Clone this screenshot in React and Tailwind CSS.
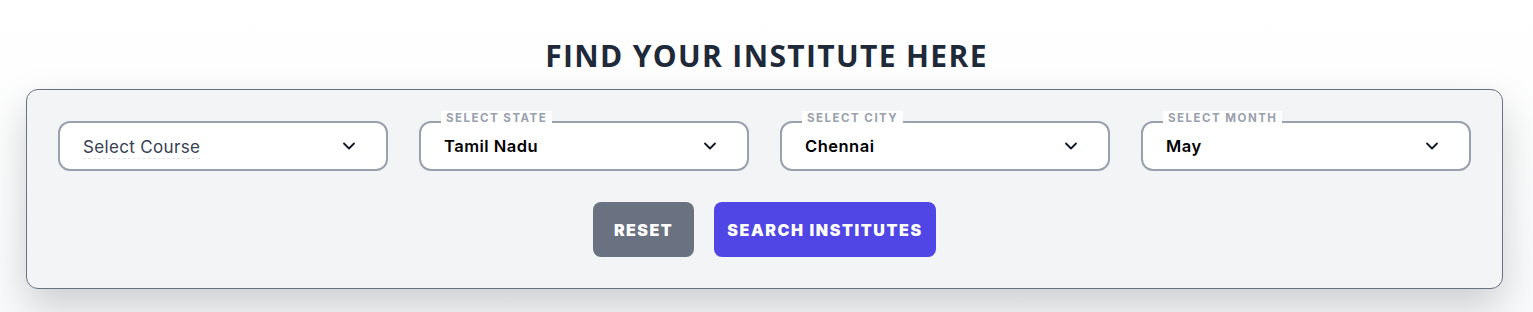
import React from 'react';
import { ChevronDown } from 'lucide-react';

// Institute search panel
function SelectField({ label, value, placeholder }) {
    return (
        <div className="relative h-[50px] rounded-xl border-2 border-gray-400 bg-white flex items-center justify-between pl-[23px] pr-[27px]">
            {label && (
                <span className="absolute -top-[12px] left-[20px] px-[5px] bg-white text-[11.5px] leading-[14px] font-bold tracking-[0.13em] text-gray-400 uppercase">
                    {label}
                </span>
            )}
            {value ? (
                <span className="text-[16.5px] font-semibold text-black tracking-[0.03em]">{value}</span>
            ) : (
                <span className="text-[17px] text-gray-700 tracking-[0.02em] border-b border-dashed border-gray-200 leading-[22px] mt-[2px]">{placeholder}</span>
            )}
            <ChevronDown className="w-[20px] h-[20px] text-gray-900" strokeWidth={2.2} />
        </div>
    );
}

export default function App() {
    return (
        <div className="min-h-screen bg-gradient-to-b from-white to-gray-50 pt-[37px] font-['Inter','Open_Sans',sans-serif]">
            <h1 className="text-center text-[30px] leading-[38px] font-bold text-gray-800 tracking-[0.045em] font-['Open_Sans','Inter',sans-serif] mb-[14px]">
                FIND YOUR INSTITUTE HERE
            </h1>

            <div className="ml-[26px] w-[1477px] rounded-xl border border-gray-500 bg-gray-100 p-[31px] shadow-[0_18px_40px_rgba(0,0,0,0.18)]">
                <div className="grid grid-cols-4 gap-[31px]">
                    <SelectField placeholder="Select Course" />
                    <SelectField label="Select State" value="Tamil Nadu" />
                    <SelectField label="Select City" value="Chennai" />
                    <SelectField label="Select Month" value="May" />
                </div>

                <div className="flex justify-center gap-[20px] mt-[31px]">
                    <button className="h-[55px] w-[101px] rounded-lg bg-gray-500 text-white text-[16px] font-black tracking-[0.09em]">
                        RESET
                    </button>
                    <button className="h-[55px] w-[222px] rounded-lg bg-[#4f46e5] text-white text-[16px] font-black tracking-[0.1em]">
                        SEARCH INSTITUTES
                    </button>
                </div>
            </div>
        </div>
    );
}
